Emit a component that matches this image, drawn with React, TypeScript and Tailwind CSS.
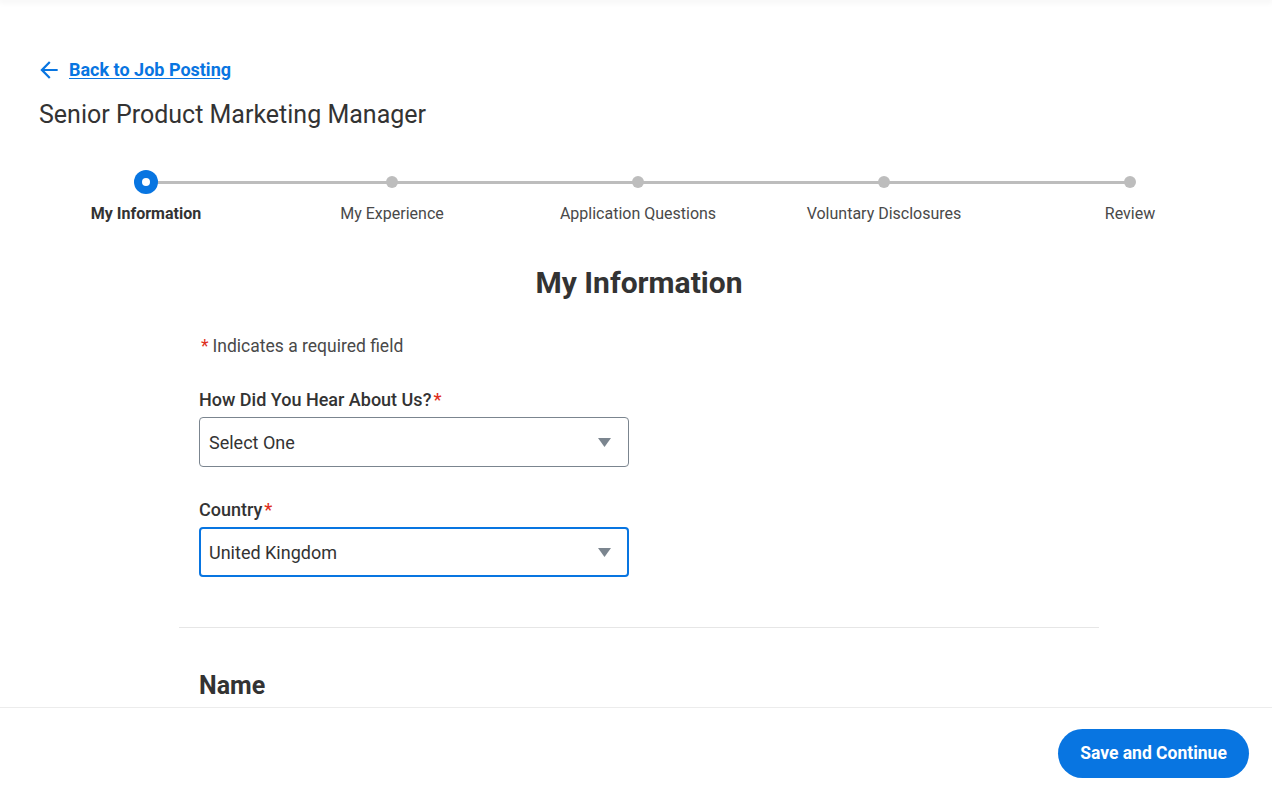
const STEPS = [
  "My Information",
  "My Experience",
  "Application Questions",
  "Voluntary Disclosures",
  "Review",
];

function BackArrow() {
  return (
    <svg width="26" height="26" viewBox="0 0 24 24" className="shrink-0">
      <path
        d="M20 11H7.83l5.59-5.59L12 4l-8 8 8 8 1.41-1.41L7.83 13H20v-2z"
        fill="#0875e1"
      />
    </svg>
  );
}

function Stepper() {
  return (
    <div className="relative ml-[23px] mt-[39px] w-[1230px]">
      <div className="absolute left-[123px] right-[123px] top-[11px] h-[3px] bg-[#bdbdbd]" />
      <div className="relative grid grid-cols-5">
        {STEPS.map((s, i) => (
          <div key={s} className="flex flex-col items-center">
            <div className="flex h-6 items-center justify-center">
              {i === 0 ? (
                <span className="flex size-6 items-center justify-center rounded-full bg-[#0875e1]">
                  <span className="size-2 rounded-full bg-white" />
                </span>
              ) : (
                <span className="size-3 rounded-full bg-[#bdbdbd]" />
              )}
            </div>
            <span
              className={
                "mt-[10px] text-base leading-5 " +
                (i === 0 ? "font-bold text-[#333333]" : "text-[#494949]")
              }
            >
              {s}
            </span>
          </div>
        ))}
      </div>
    </div>
  );
}

function Caret() {
  return (
    <svg width="13" height="9" viewBox="0 0 13 9" className="shrink-0">
      <path d="M0 0h13L6.5 9z" fill="#7b858f" />
    </svg>
  );
}

function SelectField({
  label,
  value,
  focused,
}: {
  label: string;
  value: string;
  focused?: boolean;
}) {
  return (
    <div className={(focused ? "mt-[31px]" : "mt-[30px]") + " w-[430px]"}>
      <div className="text-[18px] font-medium leading-6 text-[#333333]">
        {label}
        <span className="ml-0.5 text-[#de2e21]">*</span>
      </div>
      <button
        type="button"
        className={
          "mt-[5px] flex h-[50px] w-full items-center justify-between rounded-[4px] bg-white text-left text-[18px] text-[#333333] " +
          (focused
            ? "border-2 border-[#0875e1] pl-[8px] pr-[16px]"
            : "border border-[#7b858f] pl-[9px] pr-[17px]")
        }
      >
        <span>{value}</span>
        <Caret />
      </button>
    </div>
  );
}

export default function App() {
  return (
    <div
      className="flex h-[798px] flex-col overflow-hidden bg-white text-[#333333]"
      style={{ fontFamily: "Roboto, 'Liberation Sans', sans-serif" }}
    >
      <div className="h-0 shadow-[0_0_6px_2px_rgba(0,0,0,0.06)]" />
      <main className="flex-1 overflow-hidden">
        <div className="pl-[36px] pt-[58px]">
          <a
            href="#"
            className="flex h-6 items-center gap-[7px] text-[18px] font-bold leading-6 text-[#0875e1]"
          >
            <BackArrow />
            <span className="underline underline-offset-2">Back to Job Posting</span>
          </a>
        </div>
        <h1 className="mt-[17px] pl-[39px] text-[25px] leading-8 text-[#333333]">
          Senior Product Marketing Manager
        </h1>

        <Stepper />

        <div className="pl-[6px]">
          <div className="mx-auto w-[920px]">
            <h2 className="mt-[41px] text-center text-[30px] font-bold leading-9 text-[#333333]">
              My Information
            </h2>
            <div className="px-5">
              <p className="mt-[33px] text-[17.5px] leading-6 text-[#494949]">
                <span className="ml-0.5 mr-1 text-[#de2e21]">*</span>
                Indicates a required field
              </p>
              <SelectField label="How Did You Hear About Us?" value="Select One" />
              <SelectField label="Country" value="United Kingdom" focused />
            </div>
            <div className="mt-[50px] h-px bg-[#e6e6e6]" />
            <h3 className="mt-[42px] px-5 text-[25px] font-bold leading-8 text-[#333333]">
              Name
            </h3>
          </div>
        </div>
      </main>
      <footer className="flex h-[91px] shrink-0 items-center justify-end border-t border-[#ececec] bg-white pr-[23px]">
        <button
          type="button"
          className="h-[49px] w-[191px] rounded-full bg-[#0875e1] text-[17.5px] font-bold text-white"
        >
          Save and Continue
        </button>
      </footer>
    </div>
  );
}
